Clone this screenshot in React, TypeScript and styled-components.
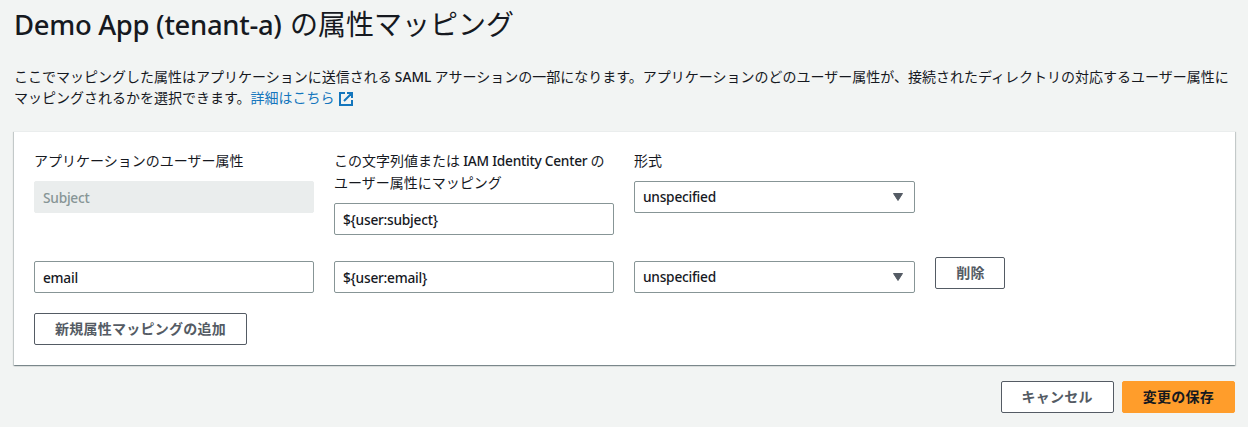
import React from 'react';
import styled, { createGlobalStyle } from 'styled-components';

const GlobalStyle = createGlobalStyle`
  * { box-sizing: border-box; }
  body {
    margin: 0;
    background: #f2f4f3;
    color: #16191f;
    font-family: 'Noto Sans CJK JP', sans-serif;
    font-size: 14px;
    line-height: 22px;
  }
`;

const Page = styled.main`
  height: 427px;
  padding: 3px 13px 0 14px;
  overflow: hidden;
`;

const Title = styled.h1`
  margin: 0;
  font-size: 28px;
  line-height: 40px;
  font-weight: 400;
  white-space: nowrap;
`;

const Latin = styled.span<{ $spacing?: number }>`
  font-family: 'Noto Sans', 'Open Sans', sans-serif;
  font-size: 0.98em;
  font-weight: 500;
  line-height: 1;
  letter-spacing: ${(p) => p.$spacing ?? -0.25}px;
`;

const TitleName = styled(Latin)`
  margin-right: 2px;
`;

const Description = styled.p`
  margin: 23px 0 0;
  line-height: 21px;
  white-space: nowrap;
`;

const Link = styled.a`
  color: #1476bd;
  text-decoration: none;
`;

const ExternalIcon = styled.svg`
  width: 16px;
  height: 16px;
  margin-left: 3px;
  vertical-align: -4px;
`;

const Panel = styled.section`
  height: 234px;
  margin-top: 23px;
  padding: 17px 20px 20px;
  border-top: 1px solid #eaeded;
  background: #fff;
  box-shadow: 0 1px 1px 0 rgba(0, 28, 36, 0.3), 1px 1px 1px 0 rgba(0, 28, 36, 0.15),
    -1px 1px 1px 0 rgba(0, 28, 36, 0.15);
`;

const Row = styled.div<{ $top?: number }>`
  display: grid;
  grid-template-columns: 280px 280px 281px auto;
  column-gap: 20px;
  justify-content: start;
  align-items: start;
  margin-top: ${(p) => p.$top ?? 0}px;
`;

const Field = styled.div<{ $top?: number }>`
  padding-top: ${(p) => p.$top ?? 0}px;
`;

const Label = styled.label`
  display: block;
  margin-bottom: 10px;
  white-space: nowrap;
`;

const Control = styled.div<{ $disabled?: boolean }>`
  display: flex;
  align-items: center;
  justify-content: space-between;
  height: 32px;
  padding: 0 10px 0 8px;
  border: 1px solid ${(p) => (p.$disabled ? '#eaeded' : '#879596')};
  border-radius: 2px;
  background: ${(p) => (p.$disabled ? '#eaeded' : '#fff')};
  color: ${(p) => (p.$disabled ? '#879596' : '#16191f')};
`;

const InputText = styled(Latin)`
  padding-top: 2px;
`;

const Caret = styled.svg`
  width: 12px;
  height: 10px;
`;

const Button = styled.button<{ $primary?: boolean }>`
  height: 32px;
  padding: 0 20px 3px;
  border: 1px solid ${(p) => (p.$primary ? '#ff9d2b' : '#545b64')};
  border-radius: 2px;
  background: ${(p) => (p.$primary ? '#ff9d2b' : '#fff')};
  color: ${(p) => (p.$primary ? '#16191f' : '#545b64')};
  font: 700 14px/22px 'Noto Sans CJK JP', sans-serif;
  letter-spacing: 0.25px;
  white-space: nowrap;
`;

const DeleteButton = styled(Button)`
  width: 70px;
  padding-right: 19px;
`;

const AddArea = styled.div`
  margin-top: 20px;
  line-height: 0;
`;

const Footer = styled.footer`
  display: flex;
  justify-content: flex-end;
  gap: 8px;
  margin-top: 16px;
`;

const TextInput = ({ value, disabled }: { value: string; disabled?: boolean }) => (
  <Control $disabled={disabled}>
    <InputText>{value}</InputText>
  </Control>
);

const Select = ({ value }: { value: string }) => (
  <Control>
    <Latin>{value}</Latin>
    <Caret viewBox="0 0 12 10">
      <path d="M1.5 1.5h9L6 8.5z" fill="#545b64" stroke="#545b64" strokeWidth="1" strokeLinejoin="round" />
    </Caret>
  </Control>
);

export default function App() {
  return (
    <>
      <GlobalStyle />
      <Page>
        <Title>
          <TitleName $spacing={-0.3}>Demo App (tenant-a)</TitleName> の属性マッピング
        </Title>
        <Description>
          ここでマッピングした属性はアプリケーションに送信される <Latin $spacing={0}>SAML</Latin>{' '}
          アサーションの一部になります。アプリケーションのどのユーザー属性が、接続されたディレクトリの対応するユーザー属性に
          <br />
          マッピングされるかを選択できます。
          <Link>
            詳細はこちら
            <ExternalIcon viewBox="0 0 16 16" fill="none" stroke="#1476bd" strokeWidth="2">
              <path d="M7 2H2v12h12V9M9 2h5v5M14 2L6 10" />
            </ExternalIcon>
          </Link>
        </Description>
        <Panel>
          <Row>
            <Field>
              <Label>アプリケーションのユーザー属性</Label>
              <TextInput value="Subject" disabled />
            </Field>
            <Field>
              <Label>
                この文字列値または <Latin>IAM Identity Center</Latin> の<br />
                ユーザー属性にマッピング
              </Label>
              <TextInput value="${user:subject}" />
            </Field>
            <Field>
              <Label>形式</Label>
              <Select value="unspecified" />
            </Field>
          </Row>
          <Row $top={22}>
            <Field $top={4}>
              <TextInput value="email" />
            </Field>
            <Field $top={4}>
              <TextInput value="${user:email}" />
            </Field>
            <Field $top={4}>
              <Select value="unspecified" />
            </Field>
            <DeleteButton>削除</DeleteButton>
          </Row>
          <AddArea>
            <Button>新規属性マッピングの追加</Button>
          </AddArea>
        </Panel>
        <Footer>
          <Button>キャンセル</Button>
          <Button $primary>変更の保存</Button>
        </Footer>
      </Page>
    </>
  );
}
